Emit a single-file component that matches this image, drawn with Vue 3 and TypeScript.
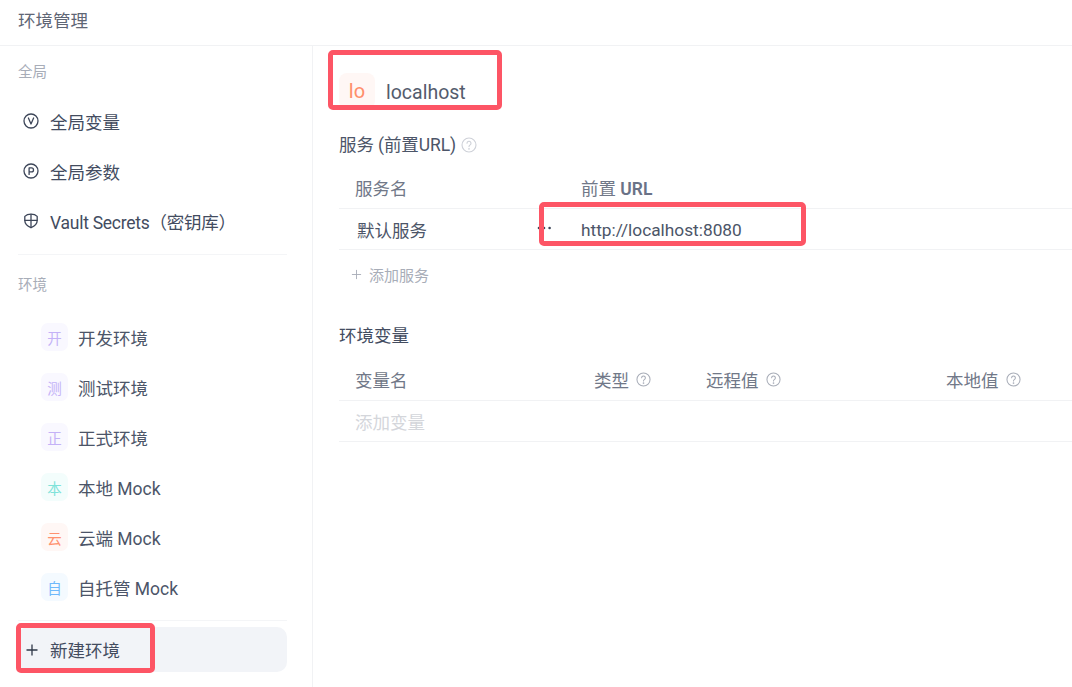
<script setup lang="ts">
interface Env { id: string; label: string; name: string; tone: string }
const globals = [
  { id: 'v', name: '全局变量' },
  { id: 'p', name: '全局参数' },
  { id: 's', name: 'Vault Secrets（密钥库）' },
]
const envs: Env[] = [
  { id: 'dev', label: '开', name: '开发环境', tone: 'violet' },
  { id: 'test', label: '测', name: '测试环境', tone: 'violet' },
  { id: 'prod', label: '正', name: '正式环境', tone: 'violet' },
  { id: 'local', label: '本', name: '本地 Mock', tone: 'teal' },
  { id: 'cloud', label: '云', name: '云端 Mock', tone: 'orange' },
  { id: 'self', label: '自', name: '自托管 Mock', tone: 'blue' },
]
const varCols = [
  { name: '类型', cls: 'c-type' },
  { name: '远程值', cls: 'c-remote' },
  { name: '本地值', cls: 'c-local' },
]
</script>

<template>
  <div class="page">
    <header class="topbar">环境管理</header>
    <div class="body">
      <aside class="side">
        <div class="side-label first">全局</div>
        <ul class="glist">
          <li v-for="g in globals" :key="g.id" class="gitem" :class="'g-' + g.id">
            <svg class="gicon" viewBox="0 0 16 16" fill="none" stroke="currentColor" stroke-width="1.3" stroke-linecap="round" stroke-linejoin="round">
              <template v-if="g.id === 'v'">
                <circle cx="8" cy="8" r="7" />
                <path d="M5.4 5 8 11l2.6-6" />
              </template>
              <template v-else-if="g.id === 'p'">
                <circle cx="8" cy="8" r="7" />
                <path d="M6.1 11.4V4.9h2.4a2 2 0 0 1 0 4H6.1" />
              </template>
              <template v-else>
                <path d="M8 1.2c2.4 0 4.8.8 6.2 2.2v4.2c0 3.2-2.6 5.6-6.2 7.1-3.6-1.5-6.2-3.9-6.2-7.1V3.4C3.2 2 5.6 1.2 8 1.2Z" />
                <path d="M8 1.5v13M1.9 7.3h12.2" />
              </template>
            </svg>
            <span>{{ g.name }}</span>
          </li>
        </ul>
        <div class="divider"></div>
        <div class="side-label">环境</div>
        <ul class="elist">
          <li v-for="e in envs" :key="e.id" class="eitem">
            <span class="badge" :class="e.tone">{{ e.label }}</span>
            <span>{{ e.name }}</span>
          </li>
        </ul>
        <div class="divider tight"></div>
        <button class="newenv" type="button">
          <svg class="plus" viewBox="0 0 12 12" fill="none" stroke="currentColor" stroke-width="1.3"><path d="M6 .5v11M.5 6h11" /></svg>
          <span>新建环境</span>
        </button>
      </aside>

      <main class="main">
        <div class="title">
          <span class="title-badge">lo</span>
          <span class="title-name">localhost</span>
        </div>

        <h2 class="sec sec-a">服务 (前置URL)
          <svg class="help big" viewBox="0 0 16 16" fill="none" stroke="currentColor" stroke-width="1.1" stroke-linecap="round"><circle cx="8" cy="8" r="7" /><path d="M6 6.2a2 2 0 1 1 3.1 1.7c-.7.5-1.1.9-1.1 1.7" /><circle cx="8" cy="11.8" r=".35" /></svg>
        </h2>
        <div class="row head svc">
          <span class="svc-name">服务名</span>
          <span class="svc-url">前置 <b>URL</b></span>
        </div>
        <div class="row svc cell">
          <span class="svc-name val">默认服务</span>
          <svg class="dots" viewBox="0 0 14 4" fill="currentColor"><circle cx="2" cy="2" r="1.3" /><circle cx="7" cy="2" r="1.3" /><circle cx="12.6" cy="2" r="1.3" /></svg>
          <span class="svc-url val">http://localhost:8080</span>
        </div>
        <div class="add">
          <svg class="plus-sm" viewBox="0 0 12 12" fill="none" stroke="currentColor" stroke-width="1"><path d="M6 1v10M1 6h10" /></svg>
          添加服务
        </div>

        <h2 class="sec sec-b">环境变量</h2>
        <div class="row head vars">
          <span class="c-name">变量名</span>
          <span v-for="c in varCols" :key="c.name" class="vcol" :class="c.cls">
            {{ c.name }}
            <svg class="help" viewBox="0 0 16 16" fill="none" stroke="currentColor" stroke-width="1.1" stroke-linecap="round"><circle cx="8" cy="8" r="7" /><path d="M6 6.2a2 2 0 1 1 3.1 1.7c-.7.5-1.1.9-1.1 1.7" /><circle cx="8" cy="11.8" r=".35" /></svg>
          </span>
        </div>
        <div class="row vars cell placeholder">
          <span class="c-name">添加变量</span>
        </div>
      </main>
    </div>

    <div class="mark m-title"></div>
    <div class="mark m-url"></div>
    <div class="mark m-new"></div>
  </div>
</template>

<style>
html, body { background: #fff; overflow: hidden; }
</style>

<style scoped>
.page {
  position: relative;
  width: 1072px;
  height: 687px;
  overflow: hidden;
  background: #fff;
  color: #434c5f;
  font-family: Roboto, "Noto Sans CJK SC", sans-serif;
  font-size: 17.5px;
}
ul { list-style: none; margin: 0; padding: 0; }
.topbar {
  height: 46px;
  box-sizing: border-box;
  border-bottom: 1px solid #f1f2f4;
  padding: 0 18px;
  line-height: 42px;
  color: #5f6675;
}
.body { display: flex; height: 641px; }
.side {
  width: 313px;
  box-sizing: border-box;
  border-right: 1px solid #f1f2f4;
  padding: 0 25px 0 18px;
  flex: none;
}
.side-label {
  font-size: 14.5px;
  color: #a8adb8;
  line-height: 20px;
  height: 20px;
  margin-top: 21px;
}
.side-label.first { margin-top: 17px; }
.glist { margin-top: 13px; }
.gitem {
  height: 50px;
  display: flex;
  align-items: center;
  padding-left: 5px;
  gap: 11px;
  color: #434c5f;
}
.g-s { letter-spacing: -0.26px; }
.gicon { width: 16px; height: 16px; flex: none; color: #3d4659; }
.divider { height: 1px; background: #f4f5f7; margin-top: 8px; }
.divider.tight { margin-top: 8px; }
.elist { margin-top: 16px; }
.eitem {
  height: 50px;
  display: flex;
  align-items: center;
  padding-left: 23px;
  gap: 10px;
  color: #4c5568;
}
.badge {
  width: 27px;
  height: 28px;
  border-radius: 7px;
  display: flex;
  align-items: center;
  justify-content: center;
  font-size: 14.5px;
}
.violet { background: #f9f8ff; color: #c4b2f7; }
.teal { background: #f3fdfc; color: #7fe3da; }
.orange { background: #fff7f5; color: #ff9270; }
.blue { background: #f4faff; color: #6fb9fb; }
.newenv {
  margin-top: 6px;
  width: 100%;
  height: 45px;
  border: 0;
  border-radius: 10px;
  background: #f2f4f8;
  display: flex;
  align-items: center;
  gap: 12px;
  padding: 0 0 0 8px;
  font: inherit;
  color: #434c5f;
}
.plus { width: 12px; height: 12px; flex: none; color: #2f3848; }

.main { flex: 1; min-width: 0; padding-left: 26px; }
.title {
  display: flex;
  align-items: center;
  gap: 11px;
  margin-top: 27px;
  height: 36px;
}
.title-badge {
  width: 36px;
  height: 36px;
  border-radius: 8px;
  background: #fff7f5;
  color: #ff8e6b;
  display: flex;
  align-items: center;
  justify-content: center;
  font-size: 20px;
}
.title-name { font-size: 19.5px; color: #545c6d; line-height: 36px; position: relative; top: 2px; }
.sec {
  margin: 0;
  font-weight: 400;
  font-size: 17.5px;
  line-height: 24px;
  color: #4c5568;
  display: flex;
  align-items: center;
  gap: 5px;
}
.sec-a { margin-top: 24px; letter-spacing: -0.1px; }
.sec-b { margin-top: 26px; color: #434c5f; }
.help { width: 15px; height: 15px; color: #a8adb8; flex: none; }
.help.big { width: 16px; height: 16px; color: #ced1d8; }
.row {
  display: flex;
  align-items: center;
  position: relative;
  border-bottom: 1px solid #f1f2f4;
  box-sizing: border-box;
}
.head { height: 41px; color: #717888; padding-bottom: 2px; }
.sec-a + .head { height: 42px; margin-top: 10px; padding-bottom: 0; }
.sec-b + .head { height: 41px; margin-top: 12px; }
.cell { height: 41px; }
.svc-name { width: 226px; padding-left: 16px; box-sizing: content-box; flex: none; }
.svc-url { flex: none; font-size: 17.5px; }
.svc-url.val { font-size: 17.3px; padding-top: 1px; }
.svc-url b { font-weight: 600; color: #6a7287; }
.val { color: #4c5568; }
.svc-name.val { padding-left: 18px; width: 224px; }
.dots {
  position: absolute;
  left: 198px;
  top: 17px;
  width: 14px;
  height: 4px;
  color: #3d4659;
}
.add {
  display: flex;
  align-items: center;
  gap: 7px;
  height: 48px;
  padding-left: 12px;
  font-size: 15px;
  color: #a8adb8;
}
.plus-sm { width: 11px; height: 11px; flex: none; color: #a8adb8; }
.vars .c-name { padding-left: 16px; width: 239px; flex: none; }
.vcol { display: flex; align-items: center; gap: 7px; flex: none; }
.c-type { width: 112px; }
.c-remote { width: 240px; }
.placeholder { color: #d4d6db; }

.mark {
  position: absolute;
  box-sizing: border-box;
  border: 5px solid #fd5565;
  border-radius: 5px;
}
.m-title { left: 328px; top: 50px; width: 174px; height: 60px; }
.m-url { left: 539px; top: 202px; width: 267px; height: 44px; }
.m-new { left: 16px; top: 623px; width: 139px; height: 50px; }
</style>
